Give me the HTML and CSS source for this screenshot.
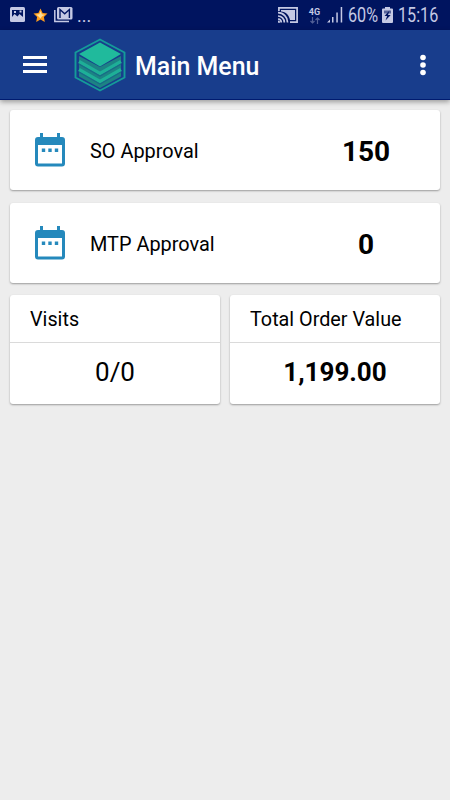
FILE: index.html
```
<!DOCTYPE html>
<html lang="en">
<head>
    <meta charset="UTF-8">
    <meta name="viewport" content="width=device-width, initial-scale=1">
    <title>Main Menu</title>
    <link rel="stylesheet" href="styles.css">
</head>
<body>
    <!-- Status bar -->
    <div class="status-bar">
        <div class="status-left">
            <svg class="icon-photo" width="16" height="16" viewBox="0 0 16 16">
                <rect width="15" height="15" rx="1.500" fill="#c5c9e4"/>
                <path fill="#00145f" d="M2 3h11v7L9.500 7 7.500 9.500 4.500 7 2 10z"/>
                <path fill="#c5c9e4" d="M4 4h2v2H4zM9.500 3.500h2v2h-2z"/>
            </svg>
            <svg class="icon-star" width="15" height="15" viewBox="0 0 15 15">
                <path fill="#ff9d1c" d="M7.500.5l2.100 4.500 4.900.6-3.600 3.400.9 5-4.300-2.400L3.200 14l.9-5L.5 5.600 5.400 5z"/>
                <path fill="#ffe09a" d="M7.500 3l1.400 3.300 3 .4-3 1.800-1.400 2-2-2-2.500-2 3.300-.3z"/>
            </svg>
            <svg class="icon-mail" width="19" height="16" viewBox="0 0 19 16">
                <path fill="none" stroke="#c5c9e4" stroke-width="1.500" d="M.8 3v11.500H15"/>
                <rect x="3" y="0" width="15.500" height="12.500" rx="1.500" fill="#c5c9e4"/>
                <path fill="none" stroke="#00145f" stroke-width="1.400" d="M6 11V2.500l4.700 4.300 4.700-4.300V11"/>
            </svg>
            <span class="more">...</span>
        </div>
        <div class="status-right">
            <svg class="icon-cast" width="20" height="16" viewBox="0 0 20 16">
                <g fill="none" stroke="#c5c9e4" stroke-width="1.700">
                    <path d="M.9 4V.9h18.200v14.200H12"/>
                    <path d="M0 5.700a9.500 9.500 0 0 1 9.500 9.800M0 9a6.300 6.300 0 0 1 6.300 6.500M0 12a3.500 3.500 0 0 1 3.300 3.500"/>
                </g>
                <path fill="#c5c9e4" d="M3 3h14v10h-5C11 8 8 5 3 4.500z"/>
                <path fill="#c5c9e4" d="M0 13.500a2.200 2.200 0 0 1 2.200 2.200H0z"/>
            </svg>
            <div class="network">
                <span>4G</span>
                <svg width="10" height="7" viewBox="0 0 10 7">
                    <path fill="none" stroke="#536097" stroke-width="1.200" d="M2.500 0v6M.5 4l2 2 2-2M7.500 7V1M5.500 3l2-2 2 2"/>
                </svg>
            </div>
            <svg class="icon-signal" width="16" height="16" viewBox="0 0 16 16">
                <path fill="#c5c9e4" d="M0 15.500L3 12.500v3zM5 10h1.500v5.500H5zM9.300 5.500h1.500v10H9.300zM13.700 0h1.500v15.500h-1.500z"/>
            </svg>
            <span class="battery-level">60%</span>
            <svg class="icon-battery" width="11" height="16" viewBox="0 0 11 16">
                <path fill="#c5c9e4" d="M3 0h5v1.500h2a1 1 0 0 1 1 1V15a1 1 0 0 1-1 1H1a1 1 0 0 1-1-1V2.500a1 1 0 0 1 1-1h2z"/>
                <path fill="#58649a" d="M2 3.500h7v3H2z"/>
                <path fill="#00145f" d="M7.500 3.500L2.500 9h2.600l-1.600 4.500L8.700 8H6z"/>
            </svg>
            <span class="clock">15:16</span>
        </div>
    </div>

    <!-- Toolbar -->
    <header class="toolbar">
        <div class="menu-btn">
            <span></span>
            <span></span>
            <span></span>
        </div>
        <svg class="logo" width="52" height="54" viewBox="0 0 52 54">
            <path fill="none" stroke="#159b99" stroke-width="1.900" d="M26 1.500l24.500 13v25L26 52.500 1.500 39.500v-25z"/>
            <path fill="#1c8384" d="M5 18l21 11 21-11v20.500L26 50 5 38.500z"/>
            <path fill="#20ba9c" d="M26 4.500L47 16 26 28.500 5 16z"/>
            <path fill="none" stroke="#1eaf97" stroke-width="3.400" d="M5 23.500l21 12 21-12M5 31.500l21 12 21-12"/>
            <path fill="none" stroke="#196a88" stroke-width="1.200" d="M5 26l21 12 21-12M5 34l21 12 21-12"/>
        </svg>
        <h1 class="title">Main Menu</h1>
        <svg class="overflow-btn" width="6" height="22" viewBox="0 0 6 22">
            <g fill="#fff">
                <circle cx="3" cy="3.500" r="2.800"/>
                <circle cx="3" cy="11" r="2.800"/>
                <circle cx="3" cy="18.500" r="2.800"/>
            </g>
        </svg>
    </header>

    <main class="content">
        <div class="card row-card">
            <svg class="calendar" width="30" height="34" viewBox="0 0 30 34">
                <path fill="#2589bc" fill-rule="evenodd" d="M5 0h3v4h14V0h3v4h2a3 3 0 0 1 3 3v23.500a3 3 0 0 1-3 3H3a3 3 0 0 1-3-3V7a3 3 0 0 1 3-3h2zM3 12v18.500h24V12z"/>
                <path fill="#2589bc" d="M6.800 15.500h3.400V19H6.800zM13.300 15.500h3.400V19h-3.400zM19.800 15.500h3.400V19h-3.400z"/>
            </svg>
            <span class="label">SO Approval</span>
            <span class="count">150</span>
        </div>

        <div class="card row-card">
            <svg class="calendar" width="30" height="34" viewBox="0 0 30 34">
                <path fill="#2589bc" fill-rule="evenodd" d="M5 0h3v4h14V0h3v4h2a3 3 0 0 1 3 3v23.500a3 3 0 0 1-3 3H3a3 3 0 0 1-3-3V7a3 3 0 0 1 3-3h2zM3 12v18.500h24V12z"/>
                <path fill="#2589bc" d="M6.800 15.500h3.400V19H6.800zM13.300 15.500h3.400V19h-3.400zM19.800 15.500h3.400V19h-3.400z"/>
            </svg>
            <span class="label">MTP Approval</span>
            <span class="count">0</span>
        </div>

        <div class="stats">
            <div class="card stat-card">
                <h2>Visits</h2>
                <p>0/0</p>
            </div>
            <div class="card stat-card">
                <h2>Total Order Value</h2>
                <p class="bold">1,199.00</p>
            </div>
        </div>
    </main>
</body>
</html>
```
FILE: styles.css
```
* {
    box-sizing: border-box;
}

body {
    margin: 0;
    min-height: 100vh;
    background-color: #ededed;
    font-family: Roboto, sans-serif;
    color: #000;
    overflow: hidden;
}

svg {
    display: block;
    flex-shrink: 0;
}

/* Status bar */
.status-bar {
    height: 30px;
    padding: 0 12px 0 10px;
    background-color: #00145f;
    color: #c5c9e4;
    display: flex;
    justify-content: space-between;
}

.status-left,
.status-right {
    display: flex;
    align-items: center;
}

.icon-star {
    margin-left: 7px;
}

.icon-mail {
    margin-left: 6px;
}

.more {
    margin-left: 4px;
    font-size: 18px;
}

.network {
    width: 13px;
    height: 15px;
    margin-left: 10px;
    margin-right: 1px;
    display: flex;
    flex-direction: column;
    align-items: center;
    gap: 1px;
    font-size: 9px;
    font-weight: 700;
    line-height: 8px;
}

.icon-signal {
    margin-left: 5px;
}

.battery-level,
.clock {
    font-size: 19.5px;
    white-space: nowrap;
    transform: scaleX(0.83);
    transform-origin: left;
}

.battery-level {
    width: 30px;
    margin-left: 5px;
}

.icon-battery {
    margin-left: 4px;
}

.clock {
    width: 40px;
    margin-left: 5px;
}

/* Toolbar */
.toolbar {
    height: 70px;
    padding: 0 24px 0 23px;
    background-color: #183d8c;
    border-bottom: 1px solid #001b70;
    box-shadow: 0 2px 5px rgba(0, 0, 0, 0.35);
    display: flex;
    align-items: center;
}

.menu-btn {
    width: 24px;
    display: flex;
    flex-direction: column;
    gap: 4px;
}

.menu-btn span {
    height: 3px;
    background-color: #fff;
}

.logo {
    margin-left: 27px;
}

.title {
    margin: 4px 0 0 9px;
    font-size: 24.9px;
    font-weight: 500;
    line-height: 30px;
    color: #fff;
}

.overflow-btn {
    margin-left: auto;
}

/* Cards */
.content {
    padding: 10px;
    display: flex;
    flex-direction: column;
    gap: 12.5px;
}

.card {
    background-color: #fff;
    border-radius: 3px;
    box-shadow: 0 1px 2px rgba(0, 0, 0, 0.35);
}

.row-card {
    height: 80px;
    padding: 0 24px 0 25px;
    display: flex;
    align-items: center;
}

.label {
    margin: 3px 0 0 25px;
    font-size: 19.9px;
}

.count {
    width: 100px;
    margin: 3px 0 0 auto;
    font-size: 28px;
    font-weight: 700;
    text-align: center;
}

.stats {
    display: grid;
    grid-template-columns: 1fr 1fr;
    gap: 10px;
}

.stat-card {
    height: 109px;
}

.stat-card h2 {
    height: 48px;
    margin: 0;
    padding: 1px 20px 0;
    border-bottom: 1px solid #dadada;
    font-size: 19.8px;
    font-weight: 400;
    line-height: 47px;
}

.stat-card p {
    margin: 0;
    font-size: 26px;
    line-height: 59px;
    text-align: center;
}

.stat-card .bold {
    font-weight: 700;
}
```
